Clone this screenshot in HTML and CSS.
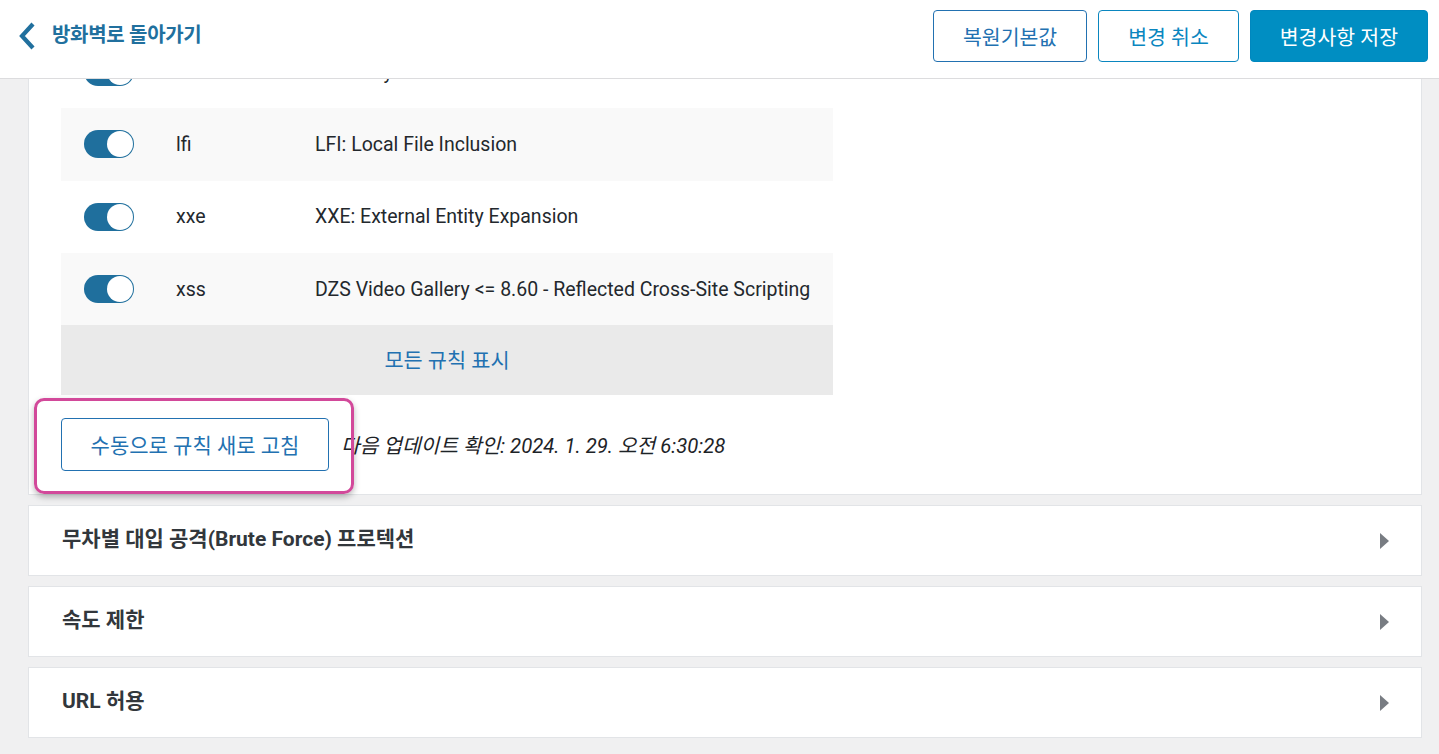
FILE: index.html
```html
<!DOCTYPE html>
<html lang="ko">
<head>
<meta charset="utf-8">
<title>방화벽 설정</title>
<link rel="stylesheet" href="styles.css">
</head>
<body>
<header class="topbar">
  <a class="back" href="#">
    <svg class="back-icon" width="18" height="30" viewBox="0 0 18 30" aria-hidden="true">
      <path d="M15 3 L4 15 L15 27" fill="none" stroke="currentColor" stroke-width="4.2" stroke-linecap="butt" stroke-linejoin="miter"/>
    </svg>
    <span class="back-label">방화벽로 돌아가기</span>
  </a>
  <div class="actions">
    <button class="btn btn-outline">복원기본값</button>
    <button class="btn btn-outline btn-outline-alt">변경 취소</button>
    <button class="btn btn-primary">변경사항 저장</button>
  </div>
</header>

<main class="content">
  <section class="panel panel-open">
    <div class="rules">
      <div class="rule-row">
        <span class="toggle"><span class="knob"></span></span>
        <span class="rule-code">traversal</span>
        <span class="rule-desc">Directory Traversal</span>
      </div>
      <div class="rule-row rule-row-alt">
        <span class="toggle"><span class="knob"></span></span>
        <span class="rule-code">lfi</span>
        <span class="rule-desc">LFI: Local File Inclusion</span>
      </div>
      <div class="rule-row">
        <span class="toggle"><span class="knob"></span></span>
        <span class="rule-code">xxe</span>
        <span class="rule-desc">XXE: External Entity Expansion</span>
      </div>
      <div class="rule-row rule-row-alt">
        <span class="toggle"><span class="knob"></span></span>
        <span class="rule-code">xss</span>
        <span class="rule-desc">DZS Video Gallery &lt;= 8.60 - Reflected Cross-Site Scripting</span>
      </div>
      <div class="rules-more">모든 규칙 표시</div>
    </div>
    <div class="refresh">
      <button class="btn btn-outline btn-refresh">수동으로 규칙 새로 고침</button>
      <span class="next-check">다음 업데이트 확인: 2024. 1. 29. 오전 6:30:28</span>
      <span class="highlight"></span>
    </div>
  </section>

  <section class="panel panel-closed">
    <h3 class="panel-title">무차별 대입 공격(Brute Force) 프로텍션</h3>
    <span class="caret"></span>
  </section>
  <section class="panel panel-closed">
    <h3 class="panel-title">속도 제한</h3>
    <span class="caret"></span>
  </section>
  <section class="panel panel-closed">
    <h3 class="panel-title">URL 허용</h3>
    <span class="caret"></span>
  </section>
</main>
</body>
</html>
```
FILE: styles.css
```css
* { box-sizing: border-box; }

html, body {
  margin: 0;
  padding: 0;
}

body {
  background: #f0f0f1;
  font-family: Roboto, "Noto Sans CJK KR", sans-serif;
  color: #1d2327;
  height: 754px;
  overflow: hidden;
}

.topbar {
  position: fixed;
  top: 0;
  left: 0;
  right: 0;
  height: 79px;
  background: #fff;
  border-bottom: 1px solid #dcdcde;
  display: flex;
  align-items: flex-start;
  justify-content: space-between;
  padding: 10px 11px 0 18px;
  z-index: 10;
}

.back {
  display: flex;
  align-items: center;
  gap: 16px;
  color: #21709e;
  text-decoration: none;
  height: 52px;
}

.back-icon { display: block; }

.back-label {
  font-size: 20px;
  font-weight: 700;
  letter-spacing: -0.3px;
  line-height: 1;
  padding-bottom: 2px;
}

.actions {
  display: flex;
  gap: 11px;
}

.btn {
  font-family: Roboto, "Noto Sans CJK KR", sans-serif;
  font-size: 20.5px;
  height: 52px;
  padding: 0 29px;
  border-radius: 4px;
  cursor: pointer;
  background: #fff;
}

.btn-outline {
  border: 1px solid #2271b1;
  color: #2271b1;
}

.btn-outline-alt {
  border-color: #0a86bf;
  color: #0a86bf;
}

.btn-primary {
  border: 1px solid #0087be;
  background: #008ec2;
  color: #fff;
}

.content {
  padding: 0 17px 0 28px;
  display: flex;
  flex-direction: column;
  gap: 10px;
}

.panel {
  background: #fff;
  border: 1px solid #e2e4e7;
}

.panel-open {
  padding: 35px 32px 23px 32px;
}

.rules {
  width: 772px;
}

.rule-row {
  display: grid;
  grid-template-columns: 115px 139px 1fr;
  align-items: center;
  height: 72.33px;
  font-size: 19.5px;
  color: #23282d;
}

.rule-row-alt { background: #f9f9f9; }

.toggle {
  margin-left: 23px;
  width: 50px;
  height: 28px;
  border-radius: 14px;
  background: #1f6f9d;
  display: flex;
  align-items: center;
  justify-content: flex-end;
  padding-right: 1px;
}

.knob {
  width: 26px;
  height: 26px;
  border-radius: 50%;
  background: #fff;
}

.rules-more {
  height: 70px;
  background: #eaeaea;
  color: #2271b1;
  font-size: 20.8px;
  display: flex;
  align-items: center;
  justify-content: center;
  padding-bottom: 3px;
}

.refresh {
  position: relative;
  display: flex;
  align-items: center;
  gap: 12px;
  margin-top: 23px;
}

.btn-refresh {
  font-size: 21px;
  padding: 0 20px 2px;
  width: 268px;
  height: 53px;
}

.next-check {
  font-style: italic;
  font-size: 20.3px;
  color: #1d2327;
  padding-bottom: 2px;
}

.highlight {
  position: absolute;
  left: -27px;
  top: -20px;
  width: 320px;
  height: 96px;
  border: 3px solid #d2499a;
  border-radius: 10px;
  box-shadow: 0 3px 6px rgba(0, 0, 0, 0.28);
  pointer-events: none;
}

.panel-closed {
  height: 71px;
  display: flex;
  align-items: center;
  justify-content: space-between;
  padding: 0 32px 0 33px;
}

.panel-title {
  margin: 0;
  font-size: 21px;
  font-weight: 700;
  color: #32373c;
  line-height: 1;
  padding-bottom: 2px;
}

.caret {
  width: 0;
  height: 0;
  border-top: 8px solid transparent;
  border-bottom: 8px solid transparent;
  border-left: 9px solid #787c82;
}
```
